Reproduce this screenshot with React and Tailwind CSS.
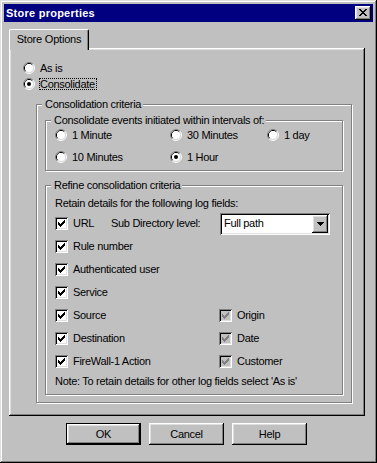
import React from "react";

const RAISED =
  "shadow-[inset_-1px_-1px_#000,inset_1px_1px_#fff,inset_-2px_-2px_#808080,inset_2px_2px_#dfdfdf]";
const SUNKEN =
  "shadow-[inset_1px_1px_#808080,inset_-1px_-1px_#fff,inset_2px_2px_#000,inset_-2px_-2px_#dfdfdf]";

function Radio({ checked }) {
  return (
    <svg width="12" height="12" viewBox="0 0 12 12" className="shrink-0 block">
      <path d="M2.11 9.89A5.5 5.5 0 0 1 9.89 2.11" fill="none" stroke="#808080" />
      <path d="M9.89 2.11A5.5 5.5 0 0 1 2.11 9.89" fill="none" stroke="#ffffff" />
      <path d="M2.82 9.18A4.5 4.5 0 0 1 9.18 2.82" fill="none" stroke="#000000" />
      <path d="M9.18 2.82A4.5 4.5 0 0 1 2.82 9.18" fill="none" stroke="#dfdfdf" />
      <circle cx="6" cy="6" r="4" fill="#ffffff" />
      {checked && <circle cx="6" cy="6" r="2" fill="#000000" />}
    </svg>
  );
}

function Check({ disabled }) {
  const cols = [
    [3, 5],
    [4, 6],
    [5, 7],
    [6, 6],
    [7, 5],
    [8, 4],
    [9, 3],
  ];
  return (
    <div
      className={`w-[13px] h-[13px] shrink-0 ${
        disabled ? "bg-[#c0c0c0]" : "bg-white"
      } shadow-[inset_1px_1px_#808080,inset_-1px_-1px_#fff,inset_2px_2px_#000,inset_-2px_-2px_#dfdfdf]`}
    >
      <svg width="13" height="13" className="block" shapeRendering="crispEdges">
        {cols.map(([x, y]) => (
          <rect key={x} x={x} y={y} width="1" height="3" fill={disabled ? "#808080" : "#000"} />
        ))}
      </svg>
    </div>
  );
}

function Group({ label, className, children }) {
  return (
    <div
      className={`relative border border-[#808080] shadow-[inset_1px_1px_#fff,1px_1px_#fff] ${className}`}
    >
      <span className="absolute top-[-8px] left-[5px] bg-[#c0c0c0] pl-[3px] pr-[2px] leading-[14px] whitespace-nowrap">
        {label}
      </span>
      {children}
    </div>
  );
}

function RadioItem({ checked, label, className = "" }) {
  return (
    <div className={`flex items-center gap-[5px] ${className}`}>
      <Radio checked={checked} />
      <span className="whitespace-nowrap">{label}</span>
    </div>
  );
}

function CheckItem({ label, disabled, className = "" }) {
  return (
    <div className={`flex items-center gap-[5px] ${className}`}>
      <Check disabled={disabled} />
      <span className="whitespace-nowrap">{label}</span>
    </div>
  );
}

function Button({ children, def }) {
  return (
    <div
      className={`w-[75px] h-[22px] bg-[#c0c0c0] flex items-center justify-center ${
        def ? "border border-black" : ""
      } ${RAISED}`}
    >
      {children}
    </div>
  );
}

export default function App() {
  const xRows = [
    [[0, 2], [6, 2]],
    [[1, 2], [5, 2]],
    [[2, 4]],
    [[3, 2]],
    [[2, 4]],
    [[1, 2], [5, 2]],
    [[0, 2], [6, 2]],
  ];
  return (
    <div className="w-[377px] h-[463px] bg-[#c0c0c0] p-[4px] flex flex-col font-['Liberation_Sans',Arial,sans-serif] text-[11px] tracking-[-0.3px] text-black shadow-[inset_-1px_-1px_#000,inset_1px_1px_#dfdfdf,inset_-2px_-2px_#808080,inset_2px_2px_#fff]">
      {/* Title bar */}
      <div className="h-[18px] bg-[#000080] flex items-center pl-[2px] pr-[2px] shrink-0">
        <span className="text-white font-bold tracking-[0.25px]">Store properties</span>
        <div className={`ml-auto w-[16px] h-[14px] bg-[#c0c0c0] ${RAISED}`}>
          <svg width="16" height="14" className="block" shapeRendering="crispEdges">
            {xRows.map((row, r) =>
              row.map(([x, w], i) => (
                <rect key={`${r}-${i}`} x={4 + x} y={3 + r} width={w} height="1" fill="#000" />
              ))
            )}
          </svg>
        </div>
      </div>

      {/* Tabs */}
      <div className="mt-[7px] ml-[5px] w-[356px] flex flex-col">
        <div className="flex">
          <div className="relative z-10 h-[21px] w-[80px] -mb-[2px] bg-[#c0c0c0] rounded-tl-[2px] rounded-tr-[2px] border-t border-l border-white border-r border-r-black shadow-[inset_-1px_0_#808080] flex items-center justify-center pb-[1px] tracking-[-0.2px]">
            Store Options
          </div>
        </div>
        <div className="h-[368px] pt-[12px] pl-[14px] shadow-[inset_-1px_-1px_#000,inset_1px_1px_#fff,inset_-2px_-2px_#808080,inset_2px_2px_#dfdfdf]">
          <RadioItem label="As is" className="h-[16px]" />
          <div className="h-[16px] flex items-center gap-[4px]">
            <Radio checked />
            <span className="border border-dotted border-black leading-[10px] whitespace-nowrap pr-[1px]">
              Consolidate
            </span>
          </div>

          <Group label="Consolidation criteria" className="mt-[12px] ml-[13px] w-[316px] h-[299px] pt-[15px] pl-[8px]">
            <Group
              label="Consolidate events initiated within intervals of:"
              className="w-[298px] h-[51px] pt-[6px] pl-[9px] flex flex-col gap-[6px]"
            >
              <div className="flex h-[16px]">
                <RadioItem label="1 Minute" className="w-[115px]" />
                <RadioItem label="30 Minutes" className="w-[97px]" />
                <RadioItem label="1 day" />
              </div>
              <div className="flex h-[16px]">
                <RadioItem label="10 Minutes" className="w-[115px]" />
                <RadioItem label="1 Hour" checked />
              </div>
            </Group>

            <Group
              label="Refine consolidation criteria"
              className="mt-[14px] w-[298px] h-[210px] pt-[9px] pl-[9px] flex flex-col"
            >
              <div className="h-[16px] flex items-center whitespace-nowrap">
                Retain details for the following log fields:
              </div>
              <div className="mt-[1px] h-[23px] flex items-center">
                <Check />
                <span className="ml-[5px] w-[38px]">URL</span>
                <span className="w-[109px] whitespace-nowrap">Sub Directory level:</span>
                <div className={`w-[110px] h-[22px] bg-white flex items-stretch p-[2px] ${SUNKEN}`}>
                  <span className="flex-1 pl-[2px] flex items-center">Full path</span>
                  <div className={`w-[16px] bg-[#c0c0c0] flex items-center justify-center ${RAISED}`}>
                    <svg width="7" height="4" className="block" shapeRendering="crispEdges">
                      <rect x="0" y="0" width="7" height="1" fill="#000" />
                      <rect x="1" y="1" width="5" height="1" fill="#000" />
                      <rect x="2" y="2" width="3" height="1" fill="#000" />
                      <rect x="3" y="3" width="1" height="1" fill="#000" />
                    </svg>
                  </div>
                </div>
              </div>
              <CheckItem label="Rule number" className="h-[23px]" />
              <CheckItem label="Authenticated user" className="h-[23px]" />
              <CheckItem label="Service" className="h-[23px]" />
              <div className="h-[23px] flex">
                <CheckItem label="Source" className="w-[164px]" />
                <CheckItem label="Origin" disabled />
              </div>
              <div className="h-[23px] flex">
                <CheckItem label="Destination" className="w-[164px]" />
                <CheckItem label="Date" disabled />
              </div>
              <div className="h-[23px] flex">
                <CheckItem label="FireWall-1 Action" className="w-[164px]" />
                <CheckItem label="Customer" disabled />
              </div>
              <div className="h-[16px] flex items-center whitespace-nowrap">
                Note: To retain details for other log fields select 'As is'
              </div>
            </Group>
          </Group>
        </div>
      </div>

      {/* Buttons */}
      <div className="mt-[7px] ml-[62px] flex gap-[8px]">
        <Button def>OK</Button>
        <Button>Cancel</Button>
        <Button>Help</Button>
      </div>
    </div>
  );
}
